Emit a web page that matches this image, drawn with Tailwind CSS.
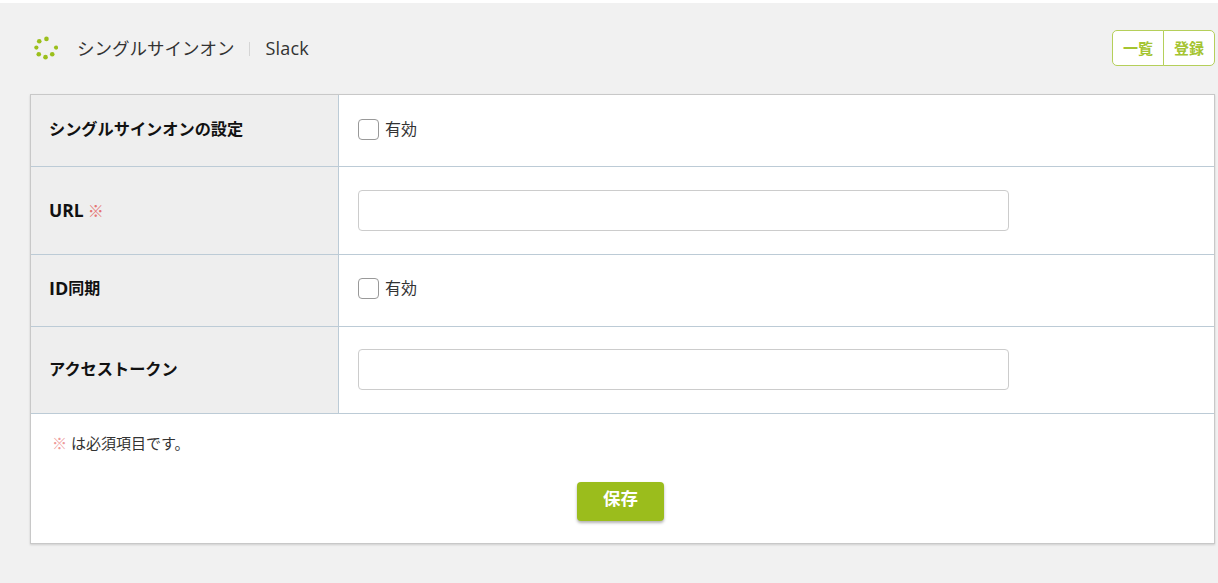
<!DOCTYPE html>
<html lang="ja">
<head>
<meta charset="UTF-8">
<title>シングルサインオン Slack</title>
<script src="https://cdn.jsdelivr.net/npm/@tailwindcss/browser@4"></script>
</head>
<body class="bg-white font-['Open_Sans','Noto_Sans_CJK_JP',sans-serif] text-[#333] overflow-hidden">
  <div class="mt-[3px] h-[580px] bg-[#f1f1f1] pl-[30px] pr-[3px]">
    <!-- header -->
    <header class="flex h-[91px] items-center justify-between">
      <div class="ml-[3px] flex items-center text-[17.5px]">
        <svg class="mr-[19px] h-[25px] w-[25px]" viewBox="0 0 26 26" fill="#9bbf1c">
          <circle cx="14" cy="3" r="2.4"/><circle cx="6.5" cy="5.5" r="2.4"/><circle cx="3.5" cy="12" r="2.2"/>
          <circle cx="6" cy="19" r="2.4"/><circle cx="13" cy="22" r="2.4"/><circle cx="20" cy="19" r="2.4"/><circle cx="24" cy="12" r="2.2"/>
        </svg>
        <span>シングルサインオン</span>
        <span class="ml-[14px] mr-[16px] h-[14px] w-px bg-[#d5d5d5]"></span>
        <span class="text-[18px] tracking-[0.2px]">Slack</span>
      </div>
      <div class="mb-[1px] flex h-[36px] text-[15px] font-bold text-[#a5c431]">
        <a class="flex w-[52px] items-center justify-center rounded-l-[5px] border-[1.5px] border-[#b5cf5a] bg-white">一覧</a>
        <a class="ml-[-1px] flex w-[52px] items-center justify-center rounded-r-[5px] border-[1.5px] border-[#b5cf5a] bg-white">登録</a>
      </div>
    </header>

    <!-- form card -->
    <form class="h-[450px] border border-[#c8c8c8] bg-white shadow-[0_1px_2px_rgba(0,0,0,0.15)]">
      <div class="grid grid-cols-[308px_1fr] text-[16px]">
        <div class="flex h-[72px] items-center border-b border-r border-[#bccbd6] bg-[#eeeeee] pb-[3px] pl-[18px] text-[16.2px] font-bold text-[#111]">シングルサインオンの設定</div>
        <div class="flex h-[72px] items-center border-b border-[#bccbd6] pb-[3px] pl-[19px]">
          <span class="h-[21px] w-[21px] rounded-[4px] border-[1.5px] border-[#999] bg-white"></span>
          <span class="ml-[6px]">有効</span>
        </div>

        <div class="flex h-[88px] items-center border-b border-r border-[#bccbd6] bg-[#eeeeee] pl-[18px] font-bold text-[#111]"><span class="text-[17.5px]">URL</span><span class="ml-[4px] font-normal text-[#e57373]">※</span></div>
        <div class="flex h-[88px] items-center border-b border-[#bccbd6] pl-[19px]">
          <input type="text" class="h-[41px] w-[651px] rounded-[4px] border-[1.5px] border-[#cccccc] bg-white">
        </div>

        <div class="flex h-[72px] items-center border-b border-r border-[#bccbd6] bg-[#eeeeee] pb-[5px] pl-[18px] font-bold text-[#111]"><span class="text-[18px]">ID</span>同期</div>
        <div class="flex h-[72px] items-center border-b border-[#bccbd6] pb-[5px] pl-[19px]">
          <span class="h-[21px] w-[21px] rounded-[4px] border-[1.5px] border-[#999] bg-white"></span>
          <span class="ml-[6px]">有効</span>
        </div>

        <div class="flex h-[87px] items-center border-b border-r border-[#bccbd6] bg-[#eeeeee] pb-[2px] pl-[18px] text-[16.2px] font-bold text-[#111]">アクセストークン</div>
        <div class="flex h-[87px] items-center border-b border-[#bccbd6] pb-[1px] pl-[19px]">
          <input type="text" class="h-[41px] w-[651px] rounded-[4px] border-[1.5px] border-[#cccccc] bg-white">
        </div>
      </div>
      <p class="pl-[21px] pt-[20px] text-[15px] leading-[18px]"><span class="text-[#ee9a9a]">※</span> は必須項目です。</p>
      <div class="mt-[30px] flex justify-center pr-[5px]">
        <button type="button" class="h-[39px] w-[87px] rounded-[4px] bg-[#9bbd1c] pb-[6px] pl-[1px] text-[17.5px] font-bold text-white shadow-[0_2px_3px_rgba(0,0,0,0.3)]">保存</button>
      </div>
    </form>
  </div>
</body>
</html>
